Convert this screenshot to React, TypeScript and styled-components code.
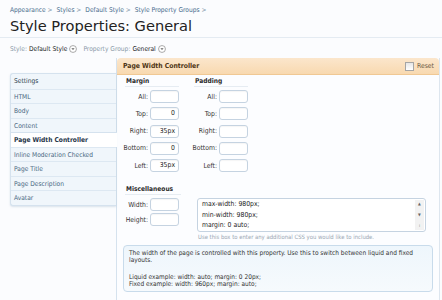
import React from 'react';
import styled, { createGlobalStyle } from 'styled-components';

const GlobalStyle = createGlobalStyle`
  html, body {
    margin: 0;
    padding: 0;
    background: #fbfcfe;
  }
  body {
    font-family: "DejaVu Sans Condensed", "DejaVu Sans", sans-serif;
    font-size: 6.5px;
    color: #2b2b2b;
  }
`;

const Page = styled.div`
  width: 442px;
  height: 300px;
  overflow: hidden;
`;

const TitleBar = styled.div`
  padding: 6px 10px 0;
  height: 31px;
  border-bottom: 1px solid #e4ebf2;
`;

const Crumbs = styled.div`
  display: flex;
  gap: 4px;
  height: 9px;
  line-height: 9px;
  color: #476b8c;
  font-size: 6.6px;
`;

const Crumb = styled.span`
  &::after {
    content: ' >';
    color: #7d94a8;
  }
`;

const Title = styled.h1`
  margin: 0;
  font-family: "DejaVu Sans", sans-serif;
  font-weight: normal;
  font-size: 14.6px;
  line-height: 21px;
  color: #222;
`;

const FilterBar = styled.div`
  display: flex;
  align-items: center;
  gap: 6px;
  padding: 0 10px;
  height: 19px;
  margin-top: 1px;
  font-size: 6.6px;
`;

const Filter = styled.span`
  display: flex;
  align-items: center;
  gap: 2px;
  color: #8a9aa8;
  b {
    font-weight: normal;
    color: #222;
  }
`;

const Main = styled.div`
  display: flex;
  padding: 0 2px 0 10px;
`;

const Sidebar = styled.div`
  width: 105px;
  margin-top: 15px;
  align-self: flex-start;
  background: #f0f6fb;
  border: 1px solid #d5e2ee;
  border-right: none;
  border-radius: 3px 0 0 3px;
  box-shadow: 0 1px 2px rgba(120, 150, 180, 0.25);
  position: relative;
  z-index: 1;
`;

const NavItem = styled.div<{ $active?: boolean }>`
  height: 14.5px;
  line-height: 14.5px;
  padding-left: 3px;
  border-top: 1px solid ${p => (p.$active ? '#d5e2ee' : '#dde8f2')};
  box-sizing: border-box;
  font-size: 6.6px;
  color: ${p => (p.$active ? '#1f3548' : '#4a6882')};
  font-weight: ${p => (p.$active ? 'bold' : 'normal')};
  background: ${p => (p.$active ? '#ffffff' : 'transparent')};
  margin-right: ${p => (p.$active ? '-1px' : '0')};
  &:first-child {
    border-top: none;
    color: #2b3d4c;
  }
`;

const Panel = styled.div`
  flex: 1;
  background: #fcfdff;
  border-left: 1px solid #d5e2ee;
  border-right: 1px solid #dde6ef;
  min-height: 260px;
`;

const PanelHeader = styled.div`
  display: flex;
  align-items: center;
  justify-content: space-between;
  height: 16px;
  padding: 0 5px 0 6px;
  background: linear-gradient(#fbe6cc, #f8d9b0);
  border-bottom: 1px solid #f0c894;
  border-radius: 4px 4px 0 0;
  font-weight: bold;
  font-size: 6.8px;
  color: #4d3414;
`;

const Reset = styled.label`
  display: flex;
  align-items: center;
  gap: 3px;
  font-weight: normal;
  color: #6d5a44;
`;

const Check = styled.span`
  width: 7px;
  height: 7px;
  border: 1px solid #a5a5a5;
  background: linear-gradient(#e6e6e6, #fff);
`;

const PanelBody = styled.div`
  padding: 2px 0 0 8px;
`;

const Groups = styled.div`
  display: flex;
  gap: 15px;
`;

const Group = styled.div`
  width: 54px;
`;

const GroupTitle = styled.div<{ $wide?: boolean }>`
  font-weight: bold;
  font-size: 6.6px;
  color: #2b2b2b;
  height: 9px;
  line-height: 9px;
  padding-left: 1px;
  border-bottom: 1px solid #e6ecf2;
  margin-bottom: 3px;
  width: ${p => (p.$wide ? '55px' : 'auto')};
`;

const FieldRow = styled.div`
  display: flex;
  align-items: center;
  gap: 2px;
  height: 13px;
  margin-bottom: 4.25px;
`;

const Label = styled.span`
  width: 23px;
  text-align: right;
  font-size: 6.8px;
  color: #333;
  white-space: nowrap;
  display: flex;
  justify-content: flex-end;
`;

const Box = styled.div`
  box-sizing: border-box;
  width: 29px;
  height: 13px;
  border: 1px solid #c5d3e1;
  border-radius: 3px;
  background: #fff;
  font-size: 6.8px;
  line-height: 11px;
  text-align: right;
  padding-right: 3px;
  color: #222;
  box-shadow: inset 0 1px 1px rgba(0, 0, 0, 0.04);
`;

const Misc = styled.div`
  margin-top: 9px;
`;

const MiscRow = styled.div`
  display: flex;
  gap: 18px;
  margin-top: 1px;
`;

const MiscFields = styled.div`
  display: flex;
  flex-direction: column;
  gap: 2px;
  & > div {
    margin-bottom: 0;
  }
`;

const Extra = styled.div`
  display: flex;
  flex-direction: column;
`;

const CssArea = styled.div`
  position: relative;
  box-sizing: border-box;
  width: 229px;
  height: 34px;
  border: 1px solid #c5d3e1;
  border-radius: 3px;
  background: #fff;
  padding: 0 4px;
  font-size: 6.8px;
  line-height: 10.5px;
  color: #222;
`;

const Scroll = styled.div`
  position: absolute;
  right: 1px;
  top: 1px;
  bottom: 1px;
  width: 9px;
  background: #f2f2f2;
  display: flex;
  flex-direction: column;
  align-items: center;
  justify-content: space-between;
  color: #666;
  font-size: 4px;
  line-height: 8px;
`;

const Hint = styled.div`
  margin-top: 2px;
  padding-left: 1px;
  font-size: 5.9px;
  color: #9aa6b2;
  white-space: nowrap;
`;

const Info = styled.div`
  box-sizing: border-box;
  margin: 5px 6px 0 -2px;
  padding: 4px 5px 0;
  height: 47px;
  border: 1px solid #c8dbeb;
  border-radius: 4px;
  background: linear-gradient(#eef6fc, #f6fafd);
  font-size: 6.5px;
  line-height: 7px;
  color: #333;
  p {
    margin: 0;
  }
  p + p {
    margin-top: 10px;
  }
`;

const DownCircle = () => (
  <svg width="8" height="8" viewBox="0 0 10 10">
    <circle cx="5" cy="5" r="4.3" fill="#fff" stroke="#8a8a8a" strokeWidth="0.9" />
    <path d="M3 4 L7 4 L5 6.4 Z" fill="#666" />
  </svg>
);

const nav = [
  'Settings',
  'HTML',
  'Body',
  'Content',
  'Page Width Controller',
  'Inline Moderation Checked',
  'Page Title',
  'Page Description',
  'Avatar',
];

const sides = ['All', 'Top', 'Right', 'Bottom', 'Left'];
const margin: Record<string, string> = { All: '', Top: '0', Right: '35px', Bottom: '0', Left: '35px' };

const App = () => {
  return (
    <Page>
      <GlobalStyle />
      <TitleBar>
        <Crumbs>
          <Crumb>Appearance</Crumb>
          <Crumb>Styles</Crumb>
          <Crumb>Default Style</Crumb>
          <Crumb>Style Property Groups</Crumb>
        </Crumbs>
        <Title>Style Properties: General</Title>
      </TitleBar>
      <FilterBar>
        <Filter>
          Style: <b>Default Style</b> <DownCircle />
        </Filter>
        <Filter>
          Property Group: <b>General</b> <DownCircle />
        </Filter>
      </FilterBar>
      <Main>
        <Sidebar>
          {nav.map(item => (
            <NavItem key={item} $active={item === 'Page Width Controller'}>
              {item}
            </NavItem>
          ))}
        </Sidebar>
        <Panel>
          <PanelHeader>
            Page Width Controller
            <Reset>
              <Check /> Reset
            </Reset>
          </PanelHeader>
          <PanelBody>
            <Groups>
              <Group>
                <GroupTitle>Margin</GroupTitle>
                {sides.map(s => (
                  <FieldRow key={s}>
                    <Label>{s}:</Label>
                    <Box>{margin[s]}</Box>
                  </FieldRow>
                ))}
              </Group>
              <Group>
                <GroupTitle>Padding</GroupTitle>
                {sides.map(s => (
                  <FieldRow key={s}>
                    <Label>{s}:</Label>
                    <Box />
                  </FieldRow>
                ))}
              </Group>
            </Groups>
            <Misc>
              <GroupTitle $wide>Miscellaneous</GroupTitle>
              <MiscRow>
                <MiscFields>
                  <FieldRow>
                    <Label>Width:</Label>
                    <Box />
                  </FieldRow>
                  <FieldRow>
                    <Label>Height:</Label>
                    <Box />
                  </FieldRow>
                </MiscFields>
                <Extra>
                  <CssArea>
                    max-width: 980px;
                    <br />
                    min-width: 980px;
                    <br />
                    margin: 0 auto;
                    <Scroll>
                      <span>▲</span>
                      <span>▼</span>
                      <span>⁞</span>
                    </Scroll>
                  </CssArea>
                  <Hint>Use this box to enter any additional CSS you would like to include.</Hint>
                </Extra>
              </MiscRow>
              <Info>
                <p>
                  The width of the page is controlled with this property. Use this to switch between liquid and fixed
                  layouts.
                </p>
                <p>
                  Liquid example: width: auto; margin: 0 20px;
                  <br />
                  Fixed example: width: 960px; margin: auto;
                </p>
              </Info>
            </Misc>
          </PanelBody>
        </Panel>
      </Main>
    </Page>
  );
};

export default App;
